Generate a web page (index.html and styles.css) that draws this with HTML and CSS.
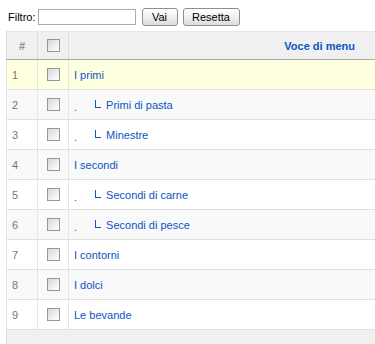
FILE: index.html
```html
<!DOCTYPE html>
<html lang="it">
<head>
<meta charset="utf-8">
<title>Voci di menu</title>
<link rel="stylesheet" href="styles.css">
</head>
<body>
<form class="filter">
  <label class="filter-label" for="f">Filtro:</label>
  <input class="filter-input" id="f" type="text">
  <button class="btn btn-vai" type="button">Vai</button>
  <button class="btn btn-reset" type="button">Resetta</button>
</form>
<table class="grid">
  <thead>
    <tr>
      <th class="col-num">#</th>
      <th class="col-check"><span class="cb"></span></th>
      <th class="col-title">Voce di menu</th>
    </tr>
  </thead>
  <tbody>
    <tr class="row hover"><td class="num">1</td><td class="check"><span class="cb"></span></td><td class="title"><a href="#">I primi</a></td></tr>
    <tr class="row alt"><td class="num">2</td><td class="check"><span class="cb"></span></td><td class="title"><span class="dot">.</span><span class="tree"></span><a href="#">Primi di pasta</a></td></tr>
    <tr class="row"><td class="num">3</td><td class="check"><span class="cb"></span></td><td class="title"><span class="dot">.</span><span class="tree"></span><a href="#">Minestre</a></td></tr>
    <tr class="row alt"><td class="num">4</td><td class="check"><span class="cb"></span></td><td class="title"><a href="#">I secondi</a></td></tr>
    <tr class="row"><td class="num">5</td><td class="check"><span class="cb"></span></td><td class="title"><span class="dot">.</span><span class="tree"></span><a href="#">Secondi di carne</a></td></tr>
    <tr class="row alt"><td class="num">6</td><td class="check"><span class="cb"></span></td><td class="title"><span class="dot">.</span><span class="tree"></span><a href="#">Secondi di pesce</a></td></tr>
    <tr class="row"><td class="num">7</td><td class="check"><span class="cb"></span></td><td class="title"><a href="#">I contorni</a></td></tr>
    <tr class="row alt"><td class="num">8</td><td class="check"><span class="cb"></span></td><td class="title"><a href="#">I dolci</a></td></tr>
    <tr class="row"><td class="num">9</td><td class="check"><span class="cb"></span></td><td class="title"><a href="#">Le bevande</a></td></tr>
  </tbody>
  <tfoot>
    <tr><td class="foot" colspan="3"></td></tr>
  </tfoot>
</table>
</body>
</html>
```
FILE: styles.css
```css
html, body {
  margin: 0;
  padding: 0;
  background: #fff;
  overflow: hidden;
}
body {
  font-family: "Liberation Sans", Arial, sans-serif;
  font-size: 11px;
  color: #333;
}
.filter {
  display: flex;
  align-items: center;
  height: 18px;
  padding: 8px 0 0 8px;
  margin: 0 0 5px 0;
}
.filter-label {
  color: #000;
  margin-right: 2px;
}
.filter-input {
  box-sizing: border-box;
  width: 98px;
  height: 16px;
  border: 1px solid #a5acb5;
  padding: 0 2px;
  margin: 0 6px 0 0;
  font: inherit;
}
.btn {
  box-sizing: border-box;
  height: 18px;
  padding: 0;
  border: 1px solid #8e8f8f;
  border-radius: 3px;
  background: linear-gradient(#ffffff, #f2f2f2 45%, #dcdcdc);
  font: inherit;
  color: #000;
}
.btn-vai { width: 36px; margin-right: 5px; }
.btn-reset { width: 57px; }

.grid {
  border-collapse: collapse;
  margin-left: 6px;
  width: calc(100% - 6px);
}
.grid th {
  height: 27px;
  background: #f0f0f0;
  border-top: 1px solid #e7e7e7;
  border-left: 1px solid #dcdcdc;
  border-bottom: 1px solid #a9a9a9;
  padding: 0;
  color: #666;
  font-weight: normal;
}
.grid .col-num { width: 30px; text-align: center; }
.grid .col-check { width: 30px; text-align: center; }
.grid .col-title {
  text-align: right;
  padding-right: 20px;
  color: #0b55c4;
  font-weight: bold;
}
.row td {
  height: 29px;
  padding: 0;
  border-left: 1px solid #e5e5e5;
  border-bottom: 1px solid #e0e0e0;
  vertical-align: middle;
}
.row { background: #fff; }
.row.alt { background: #f9f9f9; }
.row.hover { background: #ffffe1; }
.num {
  padding-left: 5px !important;
  color: #777;
}
.check { text-align: center; }
.title { padding-left: 5px !important; }
.title a {
  color: #0b55c4;
  text-decoration: none;
}
.cb {
  display: inline-block;
  box-sizing: border-box;
  width: 13px;
  height: 13px;
  border: 1px solid #979797;
  background: linear-gradient(135deg, #d8d8d8, #f4f4f4 70%, #ffffff);
  vertical-align: middle;
}
.dot {
  color: #555;
  position: relative;
  top: 2px;
}
.tree {
  display: inline-block;
  width: 5px;
  height: 7px;
  margin-left: 18px;
  margin-right: 5px;
  border-left: 1px solid #0b55c4;
  border-bottom: 1px solid #0b55c4;
  position: relative;
  top: -1px;
}
.foot {
  height: 14px;
  background: #f0f0f0;
  border-top: 1px solid #a9a9a9;
  border-left: 1px solid #dcdcdc;
  padding: 0;
}
```
